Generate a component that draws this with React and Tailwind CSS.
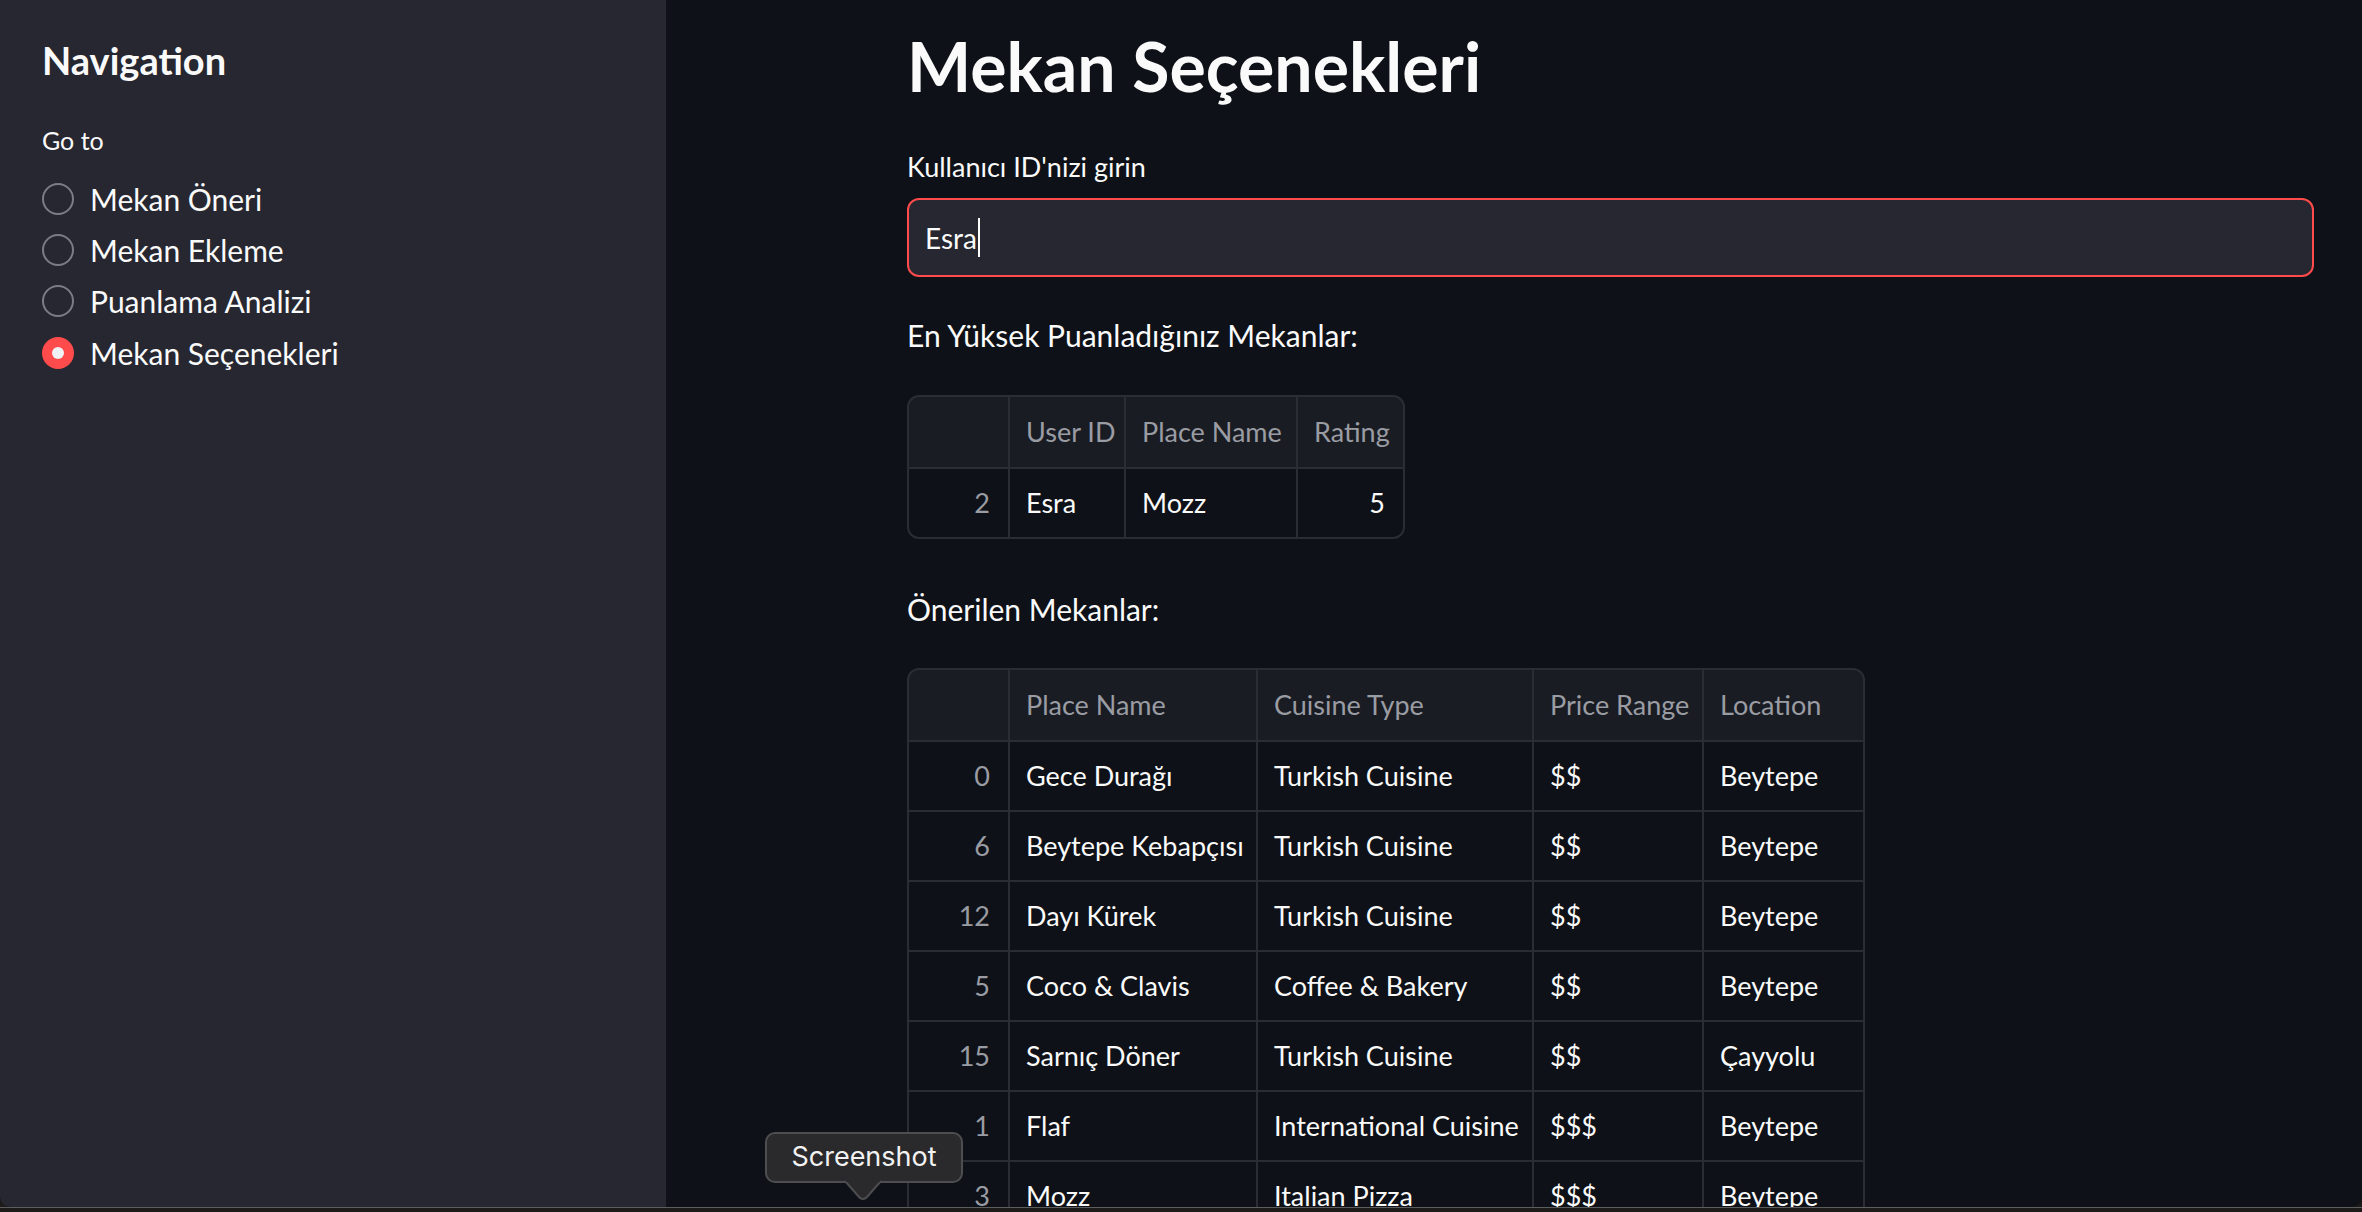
import React from "react";

const rows1 = [["2", "Esra", "Mozz", "5"]];
const rows2 = [
  ["0", "Gece Durağı", "Turkish Cuisine", "$$", "Beytepe"],
  ["6", "Beytepe Kebapçısı", "Turkish Cuisine", "$$", "Beytepe"],
  ["12", "Dayı Kürek", "Turkish Cuisine", "$$", "Beytepe"],
  ["5", "Coco & Clavis", "Coffee & Bakery", "$$", "Beytepe"],
  ["15", "Sarnıç Döner", "Turkish Cuisine", "$$", "Çayyolu"],
  ["1", "Flaf", "International Cuisine", "$$$", "Beytepe"],
  ["3", "Mozz", "Italian Pizza", "$$$", "Beytepe"],
];

function Table({ gridClass, headers, rows, rightCols }) {
  return (
    <div className={`grid ${gridClass} gap-[2px] w-fit rounded-[12px] border-2 border-[#2b2d34] bg-[#2b2d34] overflow-hidden`}>
      <div className="h-[70px] bg-[#1a1c23]" />
      {headers.map((h) => (
        <div key={h} className="h-[70px] bg-[#1a1c23] flex items-center pl-[16px] text-[27px] text-[#9a9ca3] whitespace-nowrap">
          {h}
        </div>
      ))}
      {rows.map((r, ri) =>
        r.map((c, ci) => {
          const right = ci === 0 || rightCols.includes(ci);
          return (
            <div
              key={ri + "-" + ci}
              className={`h-[68px] bg-[#0e1117] flex items-center text-[27px] whitespace-nowrap ${
                right ? "justify-end pr-[18px]" : "pl-[16px]"
              } ${ci === 0 ? "text-[#9a9ca3]" : "text-[#fafafa]"}`}
            >
              {c}
            </div>
          );
        })
      )}
    </div>
  );
}

function Radio({ label, checked }) {
  return (
    <div className="flex items-center h-[51.33px]">
      {checked ? (
        <div className="w-[32px] h-[32px] rounded-full bg-[#ff4b4b] flex items-center justify-center shrink-0">
          <div className="w-[12px] h-[12px] rounded-full bg-[#f0f2f6]" />
        </div>
      ) : (
        <div className="w-[32px] h-[32px] rounded-full border-2 border-[#7c7d84] shrink-0" />
      )}
      <span className="ml-[16px] text-[30px] leading-[36px] text-[#fafafa]">{label}</span>
    </div>
  );
}

export default function App() {
  return (
    <div className="relative w-[2362px] h-[1212px] overflow-hidden bg-[#1d1a19] font-[Lato,sans-serif]">
      <div className="flex h-[1207px] overflow-hidden rounded-b-[10px] bg-[#0e1117]">
        <aside className="w-[666px] shrink-0 bg-[#262730] pt-[36px] pl-[42px]">
          <div className="text-[38px] leading-[48px] font-bold text-[#fafafa]">Navigation</div>
          <div className="mt-[41px] text-[25px] leading-[30px] text-[#fafafa]">Go to</div>
          <div className="mt-[18px] flex flex-col">
            <Radio label="Mekan Öneri" />
            <Radio label="Mekan Ekleme" />
            <Radio label="Puanlama Analizi" />
            <Radio label="Mekan Seçenekleri" checked />
          </div>
        </aside>
        <main className="flex-1 pl-[241px] pr-[48px] pt-[26px] text-[#fafafa]">
          <h1 className="text-[68px] leading-[80px] font-bold">Mekan Seçenekleri</h1>
          <div className="mt-[44px] text-[27px] leading-[34px]">Kullanıcı ID'nizi girin</div>
          <div className="mt-[14px] h-[79px] rounded-[12px] border-2 border-[#ff4b4b] bg-[#262730] flex items-center pl-[16px]">
            <span className="text-[28px] leading-[36px]">Esra</span>
            <span className="ml-[1px] w-[2px] h-[39px] bg-[#fafafa]" />
          </div>
          <p className="mt-[38px] text-[30px] leading-[40px]">En Yüksek Puanladığınız Mekanlar:</p>
          <div className="mt-[40px]">
            <Table
              gridClass="grid-cols-[99px_114px_170px_105px]"
              headers={["User ID", "Place Name", "Rating"]}
              rows={rows1}
              rightCols={[3]}
            />
          </div>
          <p className="mt-[50px] text-[30px] leading-[40px]">Önerilen Mekanlar:</p>
          <div className="mt-[39px]">
            <Table
              gridClass="grid-cols-[99px_246px_274px_168px_159px]"
              headers={["Place Name", "Cuisine Type", "Price Range", "Location"]}
              rows={rows2}
              rightCols={[]}
            />
          </div>
        </main>
      </div>
      <div className="h-[1px] bg-[#5d5d5d]" />

      <div className="absolute left-[765px] top-[1132px] w-[198px] h-[51px] rounded-[10px] border-2 border-[#4e4e50] bg-[#2a2a2c] flex items-center justify-center font-[Inter,sans-serif] text-[27px] text-[#f2f2f2]">
        Screenshot
      </div>
      <svg className="absolute left-[845px] top-[1180px]" width="36" height="20" viewBox="0 0 36 20">
        <path d="M0 1 L14 17 Q18 21 22 17 L36 1" fill="#2a2a2c" stroke="#4e4e50" strokeWidth="2" />
        <rect x="1" y="0" width="34" height="2" fill="#2a2a2c" />
      </svg>
    </div>
  );
}
